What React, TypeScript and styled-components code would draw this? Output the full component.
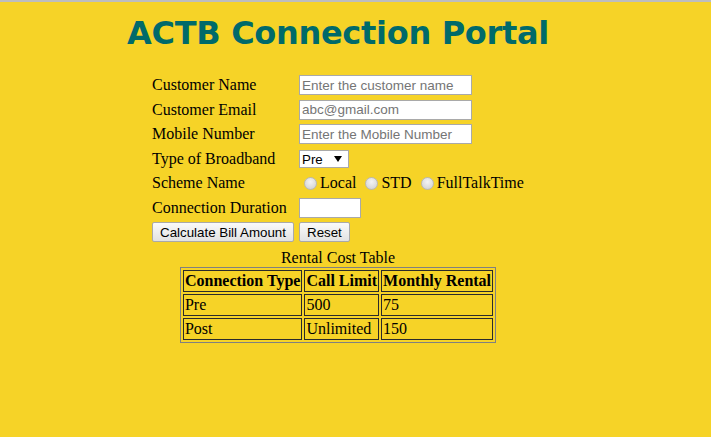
import React from "react"
import styled, { createGlobalStyle } from "styled-components"

const GlobalStyle = createGlobalStyle`
  html, body {
    margin: 0;
    padding: 0;
    background: #f6d327;
  }
  body {
    min-height: 437px;
    border-top: 2px solid #bdbdbd;
    font-family: "Liberation Serif", "Times New Roman", serif;
    font-size: 16px;
    color: #000;
  }
`

const Page = styled.div`
  width: 676px;
  display: flex;
  flex-direction: column;
  align-items: center;
`

const Title = styled.h1`
  margin: 9px 0 0;
  font-family: "DejaVu Sans", Verdana, sans-serif;
  font-size: 32px;
  font-weight: bold;
  line-height: 44px;
  letter-spacing: -0.3px;
  color: #006a6a;
`

const Form = styled.form`
  margin-top: 18px;
  display: grid;
  grid-template-columns: 147px auto;
  grid-auto-rows: 24.5px;
  align-items: center;
  width: 372px;
`

const Label = styled.label`
  line-height: 18px;
`

const TextInput = styled.input<{ $w?: number }>`
  box-sizing: border-box;
  width: ${(p) => p.$w ?? 173}px;
  height: 20px;
  padding: 1px 2px;
  border: 1px solid #a9a9a9;
  background: #fff;
  font-family: "Liberation Sans", Arial, sans-serif;
  font-size: 13.5px;
  outline: none;
  &::placeholder {
    color: #757575;
  }
`

const Select = styled.select`
  box-sizing: border-box;
  width: 50px;
  height: 18px;
  padding: 0 0 0 2px;
  border: 1px solid #a9a9a9;
  background: #fff;
  font-family: "Liberation Sans", Arial, sans-serif;
  font-size: 13.33px;
  appearance: none;
  background-image: url("data:image/svg+xml;utf8,<svg xmlns='http://www.w3.org/2000/svg' width='8' height='6'><path d='M0 0h8L4 6z' fill='black'/></svg>");
  background-repeat: no-repeat;
  background-position: right 6px center;
  border-radius: 0;
`

const RadioGroup = styled.div`
  display: flex;
  align-items: center;
`

const RadioItem = styled.label`
  display: flex;
  align-items: center;
  margin-right: 4px;
  line-height: 18px;
`

const RadioDot = styled.span`
  display: inline-block;
  box-sizing: border-box;
  width: 13px;
  height: 13px;
  margin: 0 3px 0 5px;
  border-radius: 50%;
  border: 1px solid #b8b8b8;
  background: radial-gradient(circle at 50% 35%, #f4f4f4 0%, #d9d9d9 70%, #c9c9c9 100%);
`

const Button = styled.button`
  box-sizing: border-box;
  height: 20px;
  padding: 0 7px;
  border: 1px solid #a9a9a9;
  border-radius: 2px;
  background: linear-gradient(#fafafa, #e2e2e2);
  font-family: "Liberation Sans", Arial, sans-serif;
  font-size: 13.33px;
  color: #000;
`

const ButtonRow = styled.div`
  display: contents;
`

const TableWrap = styled.div`
  margin-top: 4px;
  display: flex;
  flex-direction: column;
  align-items: center;
`

const Caption = styled.div`
  line-height: 18px;
`

const Table = styled.table`
  border: 1px solid #808080;
  border-spacing: 2px;
  border-collapse: separate;
`

const Cell = styled.td<{ $head?: boolean }>`
  border: 1px solid #2b2b2b;
  padding: 1px;
  font-weight: ${(p) => (p.$head ? "bold" : "normal")};
  text-align: left;
  line-height: 18px;
`

const rows = [
  ["Pre", "500", "75"],
  ["Post", "Unlimited", "150"],
]

export default function App() {
  return (
    <Page>
      <GlobalStyle />
      <Title>ACTB Connection Portal</Title>
      <Form onSubmit={(e) => e.preventDefault()}>
        <Label>Customer Name</Label>
        <TextInput placeholder="Enter the customer name" />
        <Label>Customer Email</Label>
        <TextInput placeholder="abc@gmail.com" />
        <Label>Mobile Number</Label>
        <TextInput placeholder="Enter the Mobile Number" />
        <Label>Type of Broadband</Label>
        <div>
          <Select defaultValue="Pre">
            <option>Pre</option>
            <option>Post</option>
          </Select>
        </div>
        <Label>Scheme Name</Label>
        <RadioGroup>
          <RadioItem>
            <RadioDot />
            Local
          </RadioItem>
          <RadioItem>
            <RadioDot />
            STD
          </RadioItem>
          <RadioItem>
            <RadioDot />
            FullTalkTime
          </RadioItem>
        </RadioGroup>
        <Label>Connection Duration</Label>
        <TextInput $w={62} />
        <ButtonRow>
          <div>
            <Button type="button">Calculate Bill Amount</Button>
          </div>
          <div>
            <Button type="reset">Reset</Button>
          </div>
        </ButtonRow>
      </Form>
      <TableWrap>
        <Caption>Rental Cost Table</Caption>
        <Table>
          <tbody>
            <tr>
              <Cell $head>Connection Type</Cell>
              <Cell $head>Call Limit</Cell>
              <Cell $head>Monthly Rental</Cell>
            </tr>
            {rows.map((r) => (
              <tr key={r[0]}>
                {r.map((c, i) => (
                  <Cell key={i}>{c}</Cell>
                ))}
              </tr>
            ))}
          </tbody>
        </Table>
      </TableWrap>
    </Page>
  )
}
